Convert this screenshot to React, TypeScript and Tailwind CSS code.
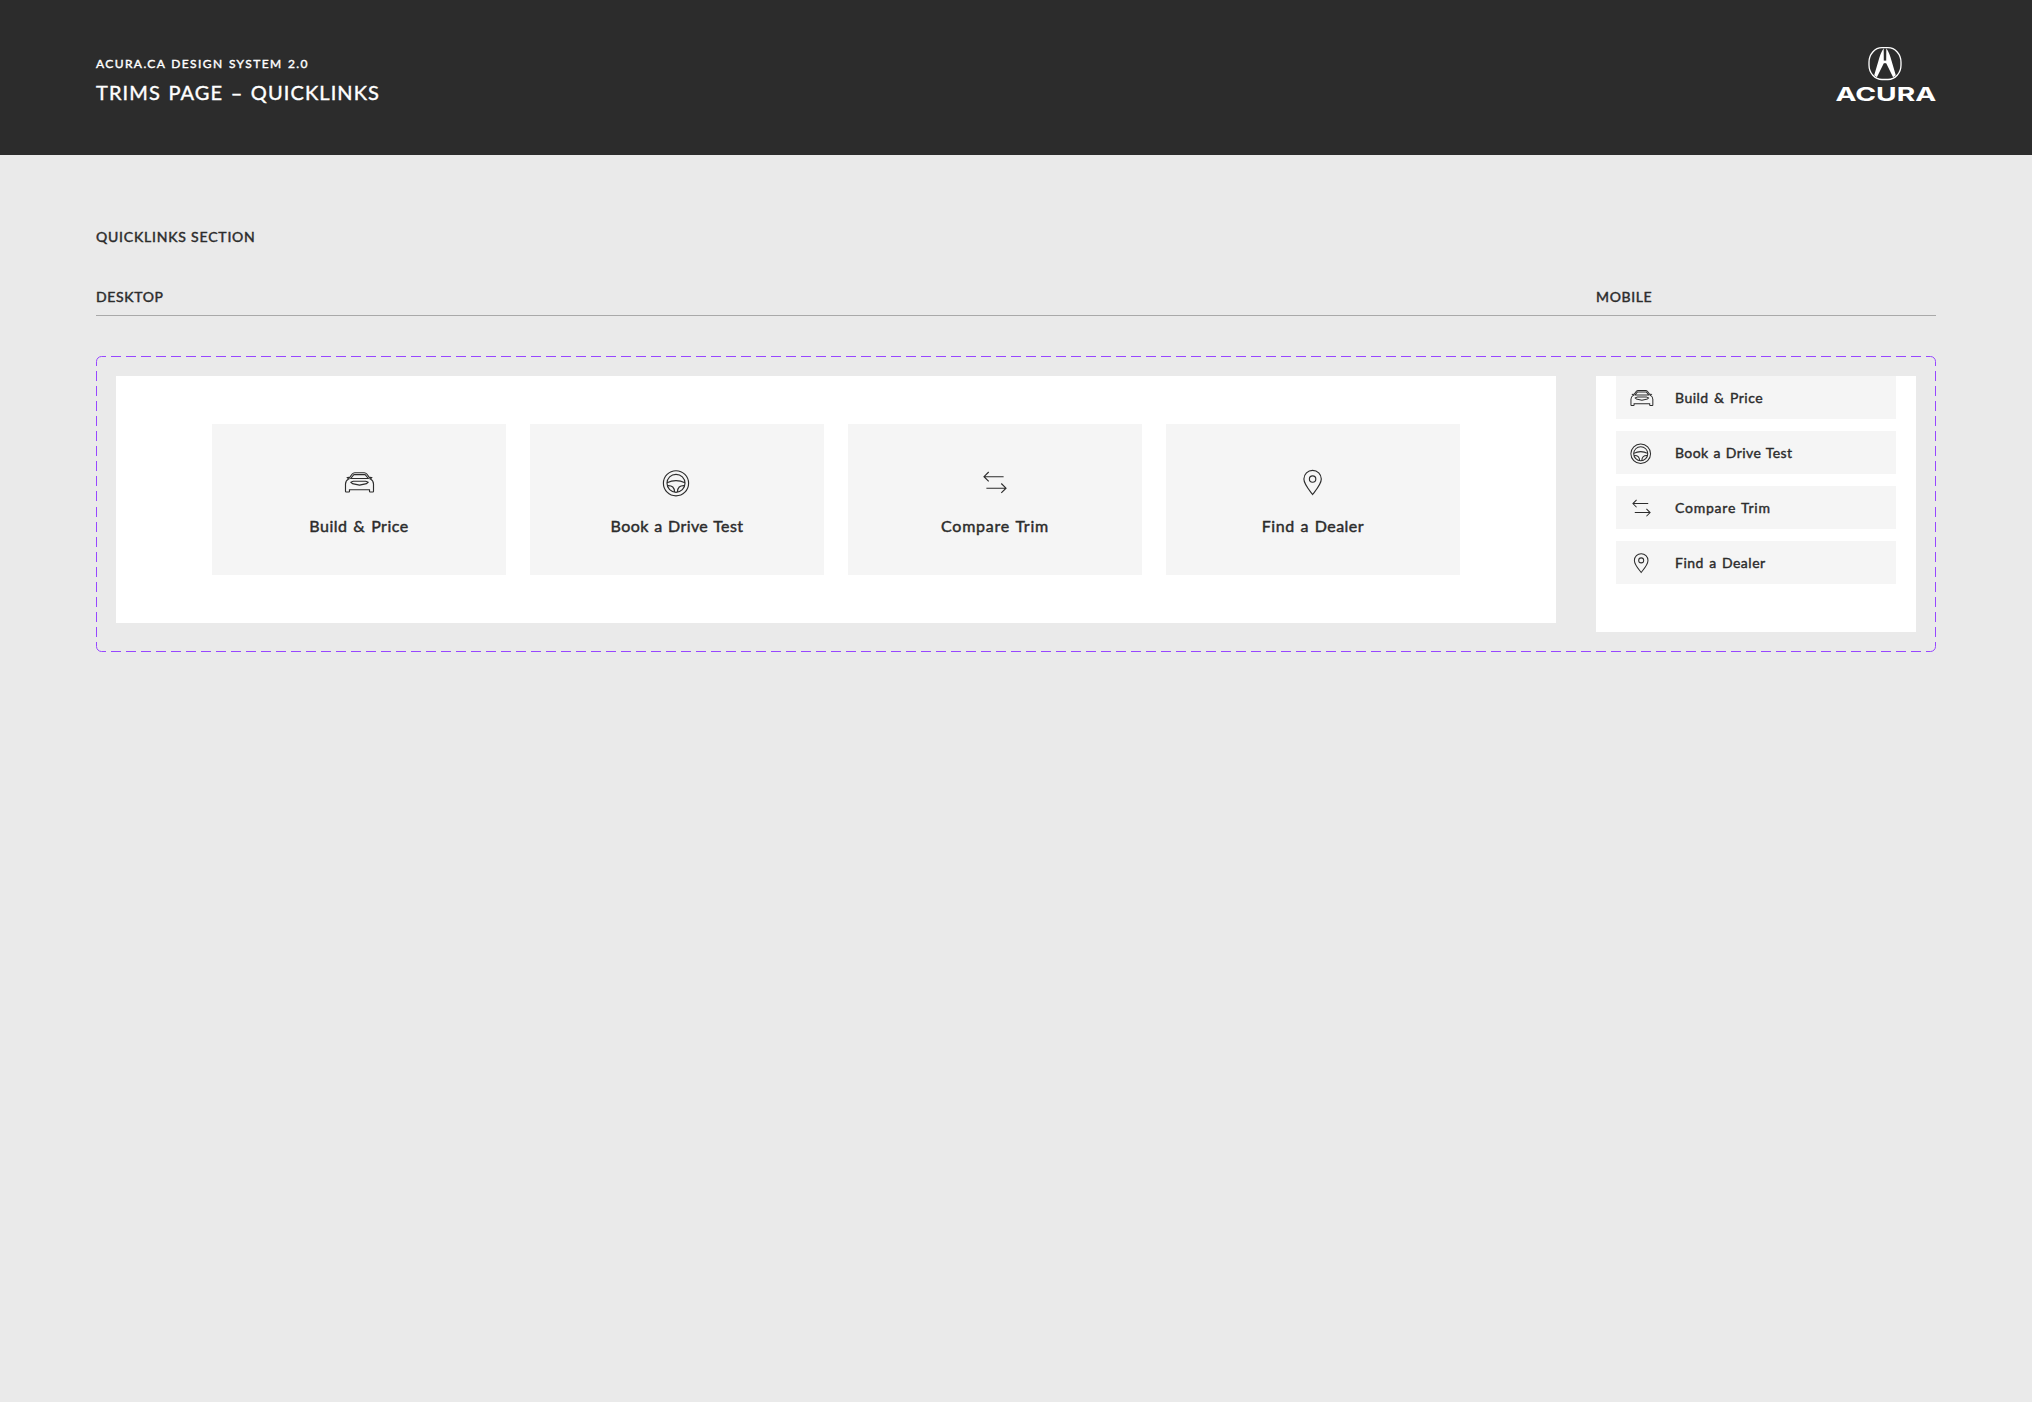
import React from "react";

type IconProps = { className?: string };

const CarIcon: React.FC<IconProps> = ({ className }) => (
  <svg viewBox="0 0 32 32" fill="none" stroke="currentColor" className={className}>
    <path d="M5.6 11.9 9.2 7Q10.2 5.7 11.8 5.7H21.2Q22.8 5.7 23.8 7L27.4 11.9" />
    <path d="M10.9 7.6H22.1L25.4 11.5H7.6Z" strokeLinejoin="round" />
    <path d="M6 10.4 4.4 10.7 5.6 12Q2.6 13.4 2.5 17V24.3Q2.5 25 3.2 25H5.8Q6.5 25 6.5 24.3V22.7H26.5V24.3Q26.5 25 27.2 25H29.8Q30.5 25 30.5 24.3V17Q30.4 13.4 27.4 12L28.6 10.7 27 10.4" />
    <path d="M7.8 15.3 10.3 14.2H22.7L25.2 15.3 23.6 16.6 16.5 18.1 9.4 16.6Z" strokeLinejoin="round" />
  </svg>
);

const WheelIcon: React.FC<IconProps> = ({ className }) => (
  <svg viewBox="0 0 32 32" fill="none" stroke="currentColor" className={className}>
    <circle cx="15" cy="16.3" r="12.6" />
    <circle cx="15" cy="16.3" r="9" />
    <path d="M6 15.8Q15 11.4 24 15.8" />
    <path d="M6.6 18.6Q13.4 18.2 13.6 25.1M23.4 18.6Q16.6 18.2 16.4 25.1" />
  </svg>
);

const CompareIcon: React.FC<IconProps> = ({ className }) => (
  <svg viewBox="0 0 32 32" fill="none" stroke="currentColor" className={className}>
    <path d="M24.6 9.7H5M9.7 5 5 9.7 9.7 14.4" />
    <path d="M7.4 21.2H27M22.3 16.5 27 21.2 22.3 25.9" />
  </svg>
);

const PinIcon: React.FC<IconProps> = ({ className }) => (
  <svg viewBox="0 0 32 32" fill="none" stroke="currentColor" className={className}>
    <path d="M15.6 27.5C12 22.8 6.9 17.3 6.9 12.1A8.7 8.7 0 0 1 24.3 12.1C24.3 17.3 19.2 22.8 15.6 27.5Z" />
    <circle cx="15.6" cy="12" r="3.2" />
  </svg>
);

const AcuraLogo = () => (
  <svg viewBox="0 0 100 62" className="h-[62px] w-[100px] overflow-visible text-white">
    <rect x="33" y=".7" width="32" height="31.8" rx="13" ry="14.5" fill="none" stroke="currentColor" strokeWidth="1.3" />
    <path d="M47.7 1.2Q44.4 6 42.4 14L38.2 28.2 40.9 30.2 47.8 16.2Z" fill="currentColor" />
    <path d="M50.3 1.2Q53.6 6 55.6 14L59.8 28.2 57.1 30.2 50.2 16.2Z" fill="currentColor" />
    <path d="M47 13.6H51V16.2H47Z" fill="currentColor" />
    <text
      x="-0.6"
      y="54"
      textLength="100.8"
      lengthAdjust="spacingAndGlyphs"
      fill="currentColor"
      fontSize="19.2"
      fontWeight="700"
      fontFamily="Inter, sans-serif"
    >
      ACURA
    </text>
  </svg>
);

// dashed component-set outline, 10/5 dashes with solid corners
const DashedFrame = () => (
  <svg
    viewBox="0 0 1840 296"
    fill="none"
    stroke="#9747ff"
    className="pointer-events-none absolute inset-0 h-full w-full"
  >
    <path d="M15 .5H1825M15 295.5H1825" strokeDasharray="10 5" shapeRendering="crispEdges" />
    <path d="M.5 15V281M1839.5 15V281" strokeDasharray="10 5.06" shapeRendering="crispEdges" />
    <path d="M.5 10V5.5A5 5 0 0 1 5.5.5H10M1830 .5H1834.5A5 5 0 0 1 1839.5 5.5V10" />
    <path d="M.5 286V290.5A5 5 0 0 0 5.5 295.5H10M1830 295.5H1834.5A5 5 0 0 0 1839.5 290.5V286" />
  </svg>
);

const links = [
  { label: "Build & Price", Icon: CarIcon, tracking: "tracking-[0.5px] [word-spacing:1.3px]" },
  { label: "Book a Drive Test", Icon: WheelIcon, tracking: "tracking-[0.4px] [word-spacing:1px]" },
  { label: "Compare Trim", Icon: CompareIcon, tracking: "tracking-[0.77px] [word-spacing:1px]" },
  { label: "Find a Dealer", Icon: PinIcon, tracking: "tracking-[0.5px] [word-spacing:1.2px]" },
];

const DesktopQuicklinks = () => (
  <div className="h-[247px] w-[1440px] bg-white px-24 py-12">
    <div className="grid h-full grid-cols-4 gap-6">
      {links.map(({ label, Icon, tracking }) => (
        <div key={label} className="flex flex-col items-center bg-[#f5f5f5] pt-[43px]">
          <Icon className="h-8 w-8 stroke-[1.15]" />
          <span className={`mt-[15px] whitespace-nowrap text-base leading-6 [-webkit-text-stroke:0.45px] ${tracking}`}>
            {label}
          </span>
        </div>
      ))}
    </div>
  </div>
);

const MobileQuicklinks = () => (
  <div className="flex h-64 w-80 flex-col gap-3 bg-white px-5">
    {links.map(({ label, Icon, tracking }) => (
      <div key={label} className="flex h-[43px] items-center bg-[#f5f5f5] pl-[13px]">
        <Icon className="mt-px h-[25px] w-[25px] stroke-[1.3]" />
        <span className={`ml-[21px] whitespace-nowrap text-sm leading-5 [-webkit-text-stroke:0.4px] ${tracking}`}>
          {label}
        </span>
      </div>
    ))}
  </div>
);

export default function App() {
  return (
    <div className="min-h-screen w-full bg-[#eaeaea] font-['Lato',sans-serif] text-[#2c2c2c]">
      <header className="flex h-[155px] items-start justify-between bg-[#2c2c2c] px-24 text-white">
        <div className="pt-14 [-webkit-text-stroke:0.4px]">
          <p className="text-xs leading-4 tracking-[1.4px] [word-spacing:0.9px]">ACURA.CA DESIGN SYSTEM 2.0</p>
          <h1 className="mt-2 text-xl leading-6 tracking-[1.1px] [word-spacing:1.3px]">TRIMS PAGE – QUICKLINKS</h1>
        </div>
        <div className="pt-[47px]">
          <AcuraLogo />
        </div>
      </header>

      <main className="px-24 pt-[72px]">
        <h2 className="text-sm leading-5 tracking-[0.8px] [-webkit-text-stroke:0.45px]">QUICKLINKS SECTION</h2>
        <div className="mt-10 flex h-[29px] border-b border-[#a9a9a9] text-sm leading-5 tracking-[0.65px] [-webkit-text-stroke:0.45px]">
          <span className="w-[1500px]">DESKTOP</span>
          <span>MOBILE</span>
        </div>

        <section className="relative mt-10 flex h-[296px] gap-10 p-5">
          <DesktopQuicklinks />
          <MobileQuicklinks />
          <DashedFrame />
        </section>
      </main>
    </div>
  );
}
